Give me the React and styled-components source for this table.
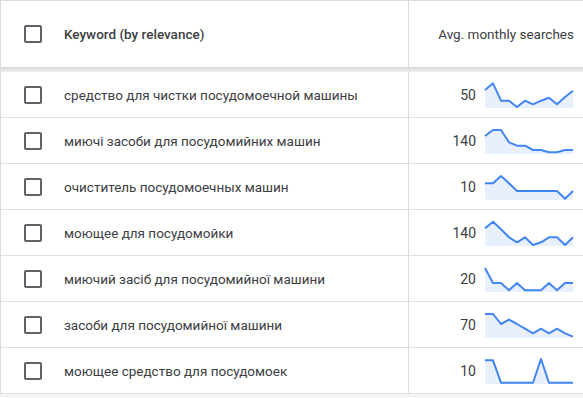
import React from "react";
import styled, { createGlobalStyle } from "styled-components";

const GlobalStyle = createGlobalStyle`
  body {
    margin: 0;
    background: #ffffff;
    font-family: Roboto, "Noto Sans", Arial, sans-serif;
  }
`;

const Table = styled.div`
  width: 100%;
  border-top: 1px solid #dadce0;
  border-left: 1px solid #dadce0;
  box-sizing: border-box;
  color: #3c4043;
`;

const Row = styled.div`
  display: grid;
  grid-template-columns: 408px 1fr;
  height: ${(p) => (p.$header ? "66px" : "46px")};
  border-bottom: ${(p) => (p.$header ? "none" : "1px solid #e0e0e0")};
  box-sizing: border-box;
`;

const Divider = styled.div`
  height: 5px;
  background: linear-gradient(#cfd1d4 0, #dcdee1 1px, #eceef0 100%);
`;

const KeywordCell = styled.div`
  display: flex;
  align-items: center;
  gap: 22px;
  padding-left: 23px;
  border-right: 1px solid #dadce0;
  font-size: 13.5px;
  font-weight: ${(p) => (p.$header ? 500 : 400)};
  white-space: nowrap;
  overflow: hidden;
`;

const SearchCell = styled.div`
  display: flex;
  align-items: center;
  justify-content: flex-end;
  gap: 8px;
  padding-right: 9px;
  font-size: 13.5px;
`;

const Checkbox = styled.span`
  width: 18px;
  height: 18px;
  flex: none;
  border: 2px solid #5f6368;
  border-radius: 2px;
  box-sizing: border-box;
`;

const Count = styled.span`
  font-size: 14px;
  text-align: right;
`;

const Footer = styled.div`
  height: 20px;
  background: #f1f3f4;
`;

const rows = [
  ["средство для чистки посудомоечной машины", 50, [8, 1.3, 18.7, 18.7, 25, 18.7, 22.3, 18.7, 15.7, 22.3, 15, 8.7]],
  ["миючі засоби для посудомийних машин", 140, [8, 2, 2, 14.3, 17.7, 17.7, 22, 22, 24.3, 24.3, 22, 22]],
  ["очиститель посудомоечных машин", 10, [9.3, 9.3, 2, 9.3, 17, 17, 17, 17, 17, 17, 24.7, 17]],
  ["моющее для посудомойки", 140, [8.3, 1.7, 9.3, 17.3, 22.3, 17.3, 25, 22.3, 17.3, 17.3, 25, 17.3]],
  ["миючий засіб для посудомийної машини", 20, [2, 17, 17, 24.3, 17, 24.3, 24.3, 24.3, 17, 24.3, 17, 17]],
  ["засоби для посудомийної машини", 70, [2, 2, 12, 7.7, 12, 16.7, 21.3, 16.7, 21.3, 16.7, 21.3, 24.7]],
  ["моющее средство для посудомоек", 10, [2.3, 2.3, 24.7, 24.7, 24.7, 24.7, 24.7, 1, 24.7, 24.7, 24.7, 24.7]],
];

function Sparkline({ data }) {
  const pts = data.map((y, i) => `${1 + i * 8},${y}`).join(" ");
  return (
    <svg width="90" height="26" viewBox="0 0 90 26">
      <polygon points={`1,26 ${pts} 89,26`} fill="#e8f0fe" />
      <polyline points={pts} fill="none" stroke="#4285f4" strokeWidth="2" strokeLinejoin="round" />
    </svg>
  );
}

export default function App() {
  return (
    <>
      <GlobalStyle />
      <Table>
        <Row $header>
          <KeywordCell $header>
            <Checkbox />
            Keyword (by relevance)
          </KeywordCell>
          <SearchCell>Avg. monthly searches</SearchCell>
        </Row>
        <Divider />
        {rows.map(([kw, count, data]) => (
          <Row key={kw}>
            <KeywordCell>
              <Checkbox />
              {kw}
            </KeywordCell>
            <SearchCell>
              <Count>{count}</Count>
              <Sparkline data={data} />
            </SearchCell>
          </Row>
        ))}
      </Table>
      <Footer />
    </>
  );
}
